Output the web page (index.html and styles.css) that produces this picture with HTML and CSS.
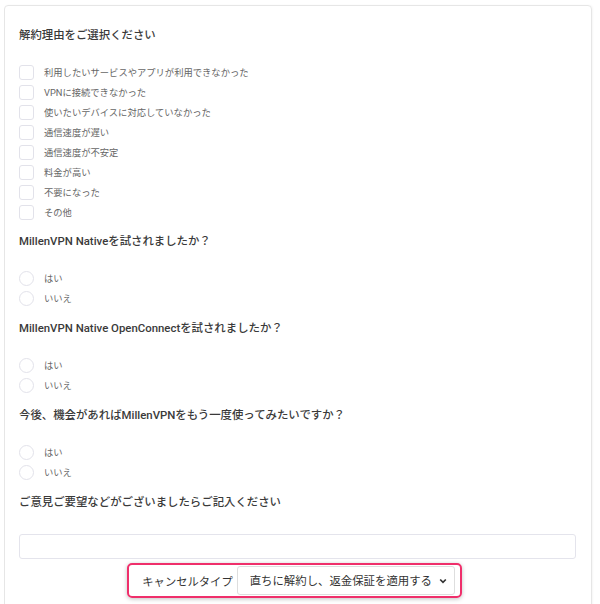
FILE: index.html
```html
<!DOCTYPE html>
<html lang="ja">
<head>
    <meta charset="UTF-8">
    <meta name="viewport" content="width=device-width, initial-scale=1.0">
    <link rel="stylesheet" href="styles.css">
    <title>解約アンケート</title>
</head>
<body>
    <div class="survey-card">
        <h3 class="question">解約理由をご選択ください</h3>
        <div class="options">
            <label class="option"><input type="checkbox"> 利用したいサービスやアプリが利用できなかった</label>
            <label class="option"><input type="checkbox"> VPNに接続できなかった</label>
            <label class="option"><input type="checkbox"> 使いたいデバイスに対応していなかった</label>
            <label class="option"><input type="checkbox"> 通信速度が遅い</label>
            <label class="option"><input type="checkbox"> 通信速度が不安定</label>
            <label class="option"><input type="checkbox"> 料金が高い</label>
            <label class="option"><input type="checkbox"> 不要になった</label>
            <label class="option"><input type="checkbox"> その他</label>
        </div>

        <h3 class="question">MillenVPN Nativeを試されましたか？</h3>
        <div class="options options-radio">
            <label class="option"><input type="radio" name="native"> はい</label>
            <label class="option"><input type="radio" name="native"> いいえ</label>
        </div>

        <h3 class="question">MillenVPN Native OpenConnectを試されましたか？</h3>
        <div class="options options-radio">
            <label class="option"><input type="radio" name="openconnect"> はい</label>
            <label class="option"><input type="radio" name="openconnect"> いいえ</label>
        </div>

        <h3 class="question">今後、機会があればMillenVPNをもう一度使ってみたいですか？</h3>
        <div class="options options-radio">
            <label class="option"><input type="radio" name="again"> はい</label>
            <label class="option"><input type="radio" name="again"> いいえ</label>
        </div>

        <h3 class="question question-last">ご意見ご要望などがございましたらご記入ください</h3>
        <textarea class="comment" rows="1"></textarea>

        <div class="cancel-row">
            <div class="cancel-type">
                <span class="cancel-label">キャンセルタイプ</span>
                <div class="select-wrap">
                    <select class="cancel-select">
                        <option>直ちに解約し、返金保証を適用する</option>
                        <option>契約期間の終了時に解約する</option>
                    </select>
                    <svg class="chevron" width="8" height="6" viewBox="0 0 8 6">
                        <path d="M1.2 1.5 L4 4.3 L6.8 1.5" fill="none" stroke="#333" stroke-width="1.7"/>
                    </svg>
                </div>
            </div>
        </div>
    </div>
</body>
</html>
```

FILE: styles.css
```css
body {
    font-family: Roboto, "Noto Sans CJK JP", sans-serif;
    background-color: #fff;
    color: #333;
    margin: 0;
    padding: 5px 0 0 4px;
}

.survey-card {
    width: 557px;
    min-height: 640px;
    border: 1px solid #e6e6e6;
    border-radius: 4px;
    padding: 19px 15px 0 14px;
    box-shadow: 1px 0 2px rgba(0, 0, 0, 0.04);
}

.question {
    margin: 0 0 17px;
    font-size: 11.4px;
    font-weight: 500;
    line-height: 20px;
    color: #3a3a3a;
}

.options {
    display: flex;
    flex-direction: column;
    margin-bottom: 9px;
}

.options-radio {
    margin-top: 1px;
    margin-bottom: 10px;
}

.option {
    display: flex;
    align-items: center;
    gap: 10px;
    height: 20px;
    font-size: 9.3px;
    color: #666;
}

.option input {
    appearance: none;
    -webkit-appearance: none;
    width: 15px;
    height: 15px;
    margin: 0;
    border: 1px solid #e2e2ea;
    border-radius: 3px;
    background-color: #fff;
}

.option input[type="radio"] {
    border-radius: 50%;
}

.question-last {
    margin-bottom: 22px;
}

.comment {
    display: block;
    box-sizing: border-box;
    width: 100%;
    height: 25px;
    margin: 0;
    border: 1px solid #e4e4ec;
    border-radius: 3px;
    resize: none;
}

.cancel-row {
    display: flex;
    justify-content: center;
    padding: 4px 6px 0 0;
}

.cancel-type {
    display: flex;
    align-items: center;
    gap: 4px;
    height: 31px;
    padding: 0 5px 0 13px;
    border: 2px solid #ef2f6b;
    border-radius: 5px;
    box-shadow: 0 1px 4px rgba(0, 0, 0, 0.25);
}

.cancel-label {
    font-size: 11.3px;
    color: #333;
}

.select-wrap {
    position: relative;
}

.cancel-select {
    appearance: none;
    -webkit-appearance: none;
    width: 218px;
    height: 29px;
    padding: 0 0 0 12px;
    font-family: Roboto, "Noto Sans CJK JP", sans-serif;
    font-size: 11.4px;
    color: #333;
    background-color: #fff;
    border: 1px solid #dedede;
    border-radius: 3px;
}

.chevron {
    position: absolute;
    right: 8px;
    top: 12px;
    pointer-events: none;
}
```
